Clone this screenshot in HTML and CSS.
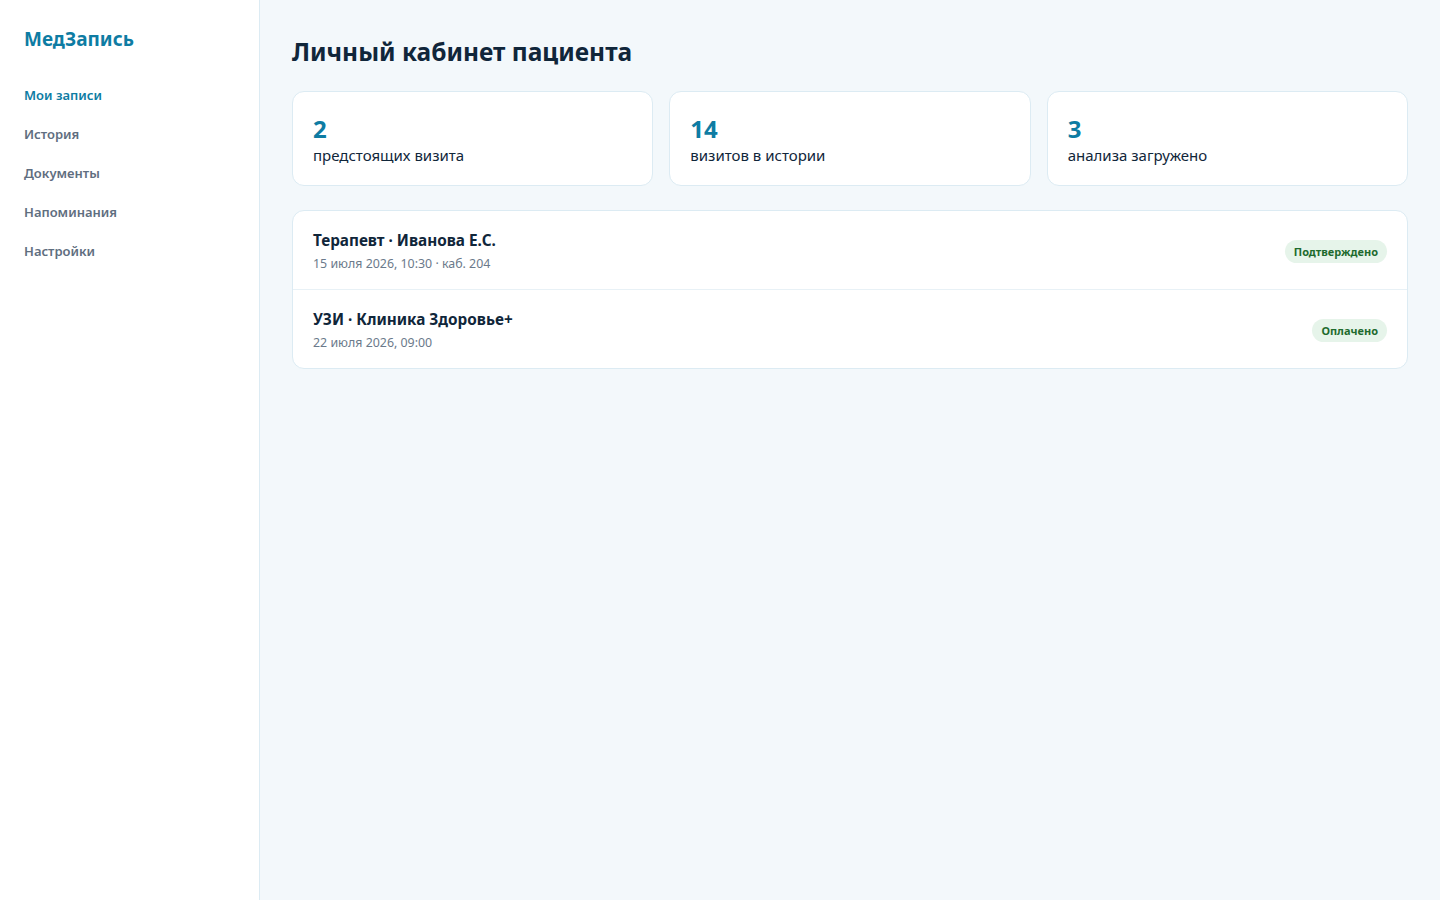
FILE: index.html
```html
<!DOCTYPE html>
<html lang="ru">
<head>
    <meta charset="UTF-8">
    <meta name="viewport" content="width=device-width, initial-scale=1.0">
    <title>МедЗапись — Личный кабинет</title>
    <link rel="stylesheet" href="styles.css">
</head>
<body>
    <div class="layout">
        <aside class="sidebar">
            <div class="logo">МедЗапись</div>
            <nav class="nav">
                <a href="#" class="nav-item active">Мои записи</a>
                <a href="#" class="nav-item">История</a>
                <a href="#" class="nav-item">Документы</a>
                <a href="#" class="nav-item">Напоминания</a>
                <a href="#" class="nav-item">Настройки</a>
            </nav>
        </aside>

        <main class="main">
            <h1>Личный кабинет пациента</h1>

            <div class="stats">
                <div class="stat">
                    <div class="stat-num">2</div>
                    <div class="stat-label">предстоящих визита</div>
                </div>
                <div class="stat">
                    <div class="stat-num">14</div>
                    <div class="stat-label">визитов в истории</div>
                </div>
                <div class="stat">
                    <div class="stat-num">3</div>
                    <div class="stat-label">анализа загружено</div>
                </div>
            </div>

            <div class="visits">
                <div class="visit">
                    <div>
                        <div class="visit-title">Терапевт · Иванова Е.С.</div>
                        <div class="visit-meta">15 июля 2026, 10:30 · каб. 204</div>
                    </div>
                    <span class="badge">Подтверждено</span>
                </div>
                <div class="visit">
                    <div>
                        <div class="visit-title">УЗИ · Клиника Здоровье+</div>
                        <div class="visit-meta">22 июля 2026, 09:00</div>
                    </div>
                    <span class="badge">Оплачено</span>
                </div>
            </div>
        </main>
    </div>
</body>
</html>
```

FILE: styles.css
```css
* {
    box-sizing: border-box;
    font-family: 'Noto Sans', 'Open Sans', sans-serif;
}

body {
    margin: 0;
    background-color: #f3f8fb;
    color: #10263a;
}

.layout {
    display: flex;
    min-height: 100vh;
}

.sidebar {
    width: 260px;
    flex-shrink: 0;
    background-color: #ffffff;
    border-right: 1px solid #dcebf3;
    padding: 26px 24px;
}

.logo {
    font-size: 19px;
    font-weight: 700;
    color: #0e7ca3;
    line-height: 26px;
    margin-bottom: 32px;
}

.nav {
    display: flex;
    flex-direction: column;
    gap: 17px;
}

.nav-item {
    font-size: 13px;
    font-weight: 600;
    color: #5f6e80;
    text-decoration: none;
    line-height: 22px;
}

.nav-item.active {
    color: #0e7ca3;
}

.main {
    flex: 1;
    padding: 32px;
}

h1 {
    margin: 0 0 20px;
    font-size: 24.5px;
    font-weight: 700;
    line-height: 39px;
    color: #10263a;
}

.stats {
    display: grid;
    grid-template-columns: repeat(3, 1fr);
    gap: 16px;
    margin-bottom: 24px;
}

.stat {
    background-color: #ffffff;
    border: 1px solid #dcebf3;
    border-radius: 12px;
    padding: 22px 20px 19px;
}

.stat-num {
    font-size: 24px;
    font-weight: 700;
    color: #0e7ca3;
    line-height: 30px;
}

.stat-label {
    font-size: 15px;
    line-height: 22px;
    color: #10263a;
}

.visits {
    background-color: #ffffff;
    border: 1px solid #dcebf3;
    border-radius: 12px;
}

.visit {
    display: flex;
    align-items: center;
    justify-content: space-between;
    padding: 17px 20px 14px;
    border-bottom: 1px solid #e8f1f6;
}

.visit:last-child {
    border-bottom: none;
}

.visit-title {
    font-size: 15.3px;
    font-weight: 700;
    line-height: 24px;
    color: #10263a;
}

.visit-meta {
    margin-top: 1px;
    font-size: 12.4px;
    color: #6b7a8b;
    line-height: 22px;
}

.badge {
    background-color: #e6f4ea;
    color: #1e6b2e;
    font-size: 11px;
    font-weight: 700;
    padding: 4px 9px;
    border-radius: 999px;
}
```
